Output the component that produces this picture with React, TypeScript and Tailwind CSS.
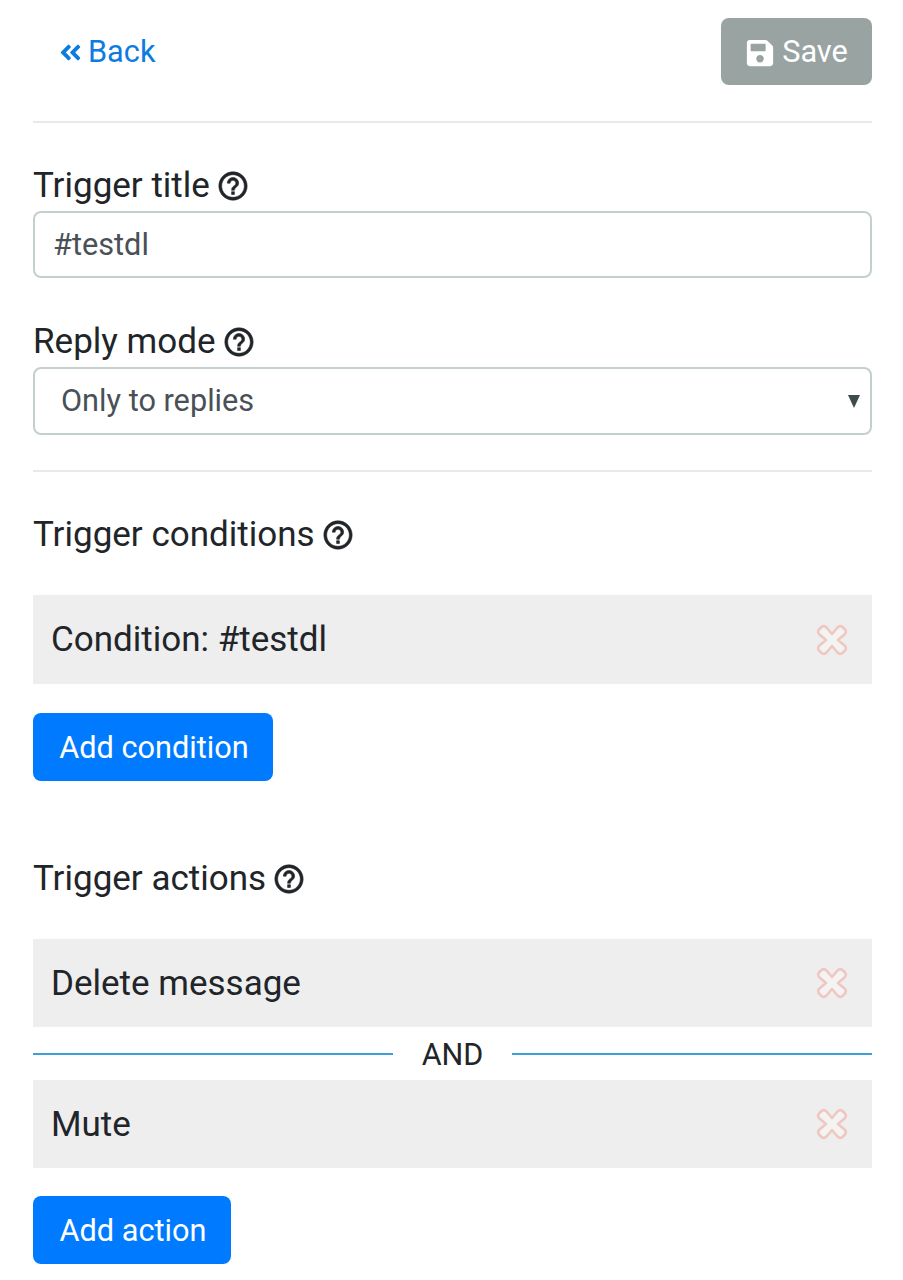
import { FaAngleDoubleLeft, FaSave } from "react-icons/fa";

function HelpIcon() {
  return (
    <svg width="34" height="34" viewBox="0 0 24 24" className="shrink-0 text-[#212529]">
      <path
        d="M11 18h2v-2h-2v2zm1-16C6.48 2 2 6.48 2 12s4.48 10 10 10 10-4.48 10-10S17.52 2 12 2zm0 18c-4.41 0-8-3.59-8-8s3.59-8 8-8 8 3.59 8 8-3.59 8-8 8zm0-14c-2.21 0-4 1.79-4 4h2c0-1.1.9-2 2-2s2 .9 2 2c0 2-3 1.75-3 5h2c0-2.25 3-2.5 3-5 0-2.21-1.79-4-4-4z"
        fill="currentColor"
        stroke="currentColor"
        strokeWidth="0.4"
      />
    </svg>
  );
}

function HelpLabel({ text, className }: { text: string; className: string }) {
  return (
    <div className={`flex h-[40px] items-center gap-[6px] pt-[2px] text-[35px] leading-[40px] text-[#212529] ${className}`}>
      <span>{text}</span>
      <HelpIcon />
    </div>
  );
}

function RemoveIcon() {
  return (
    <svg width="32" height="32" viewBox="0 0 32 32" className="-mt-[2px] shrink-0">
      <path
        d="M16 10 L21.5 3.5 Q24 1 26.5 3 L29 5.5 Q31 8 28.5 10.5 L22 16 L28.5 21.5 Q31 24 29 26.5 L26.5 29 Q24 31 21.5 28.5 L16 22 L10.5 28.5 Q8 31 5.5 29 L3 26.5 Q1 24 3.5 21.5 L10 16 L3.5 10.5 Q1 8 3 5.5 L5.5 3 Q8 1 10.5 3.5 Z"
        fill="#f3f4f2"
        stroke="#efc6c1"
        strokeWidth="2.5"
        strokeLinejoin="round"
      />
    </svg>
  );
}

function ItemRow({ text, height }: { text: string; height: string }) {
  return (
    <div className={`flex items-center justify-between bg-[#eeeeee] pl-[18px] pr-[24px] pt-[2px] ${height}`}>
      <span className="text-[35px] text-[#212529]">{text}</span>
      <RemoveIcon />
    </div>
  );
}

function AddButton({ text, width, className }: { text: string; width: string; className: string }) {
  return (
    <button className={`flex h-[68px] items-center justify-center rounded-[8px] bg-[#007bff] pl-[2px] pt-[2px] text-[30.7px] text-white ${width} ${className}`}>
      {text}
    </button>
  );
}

export default function App() {
  return (
    <div className="h-[1280px] w-[903px] overflow-hidden bg-white pl-[33px] pr-[31px] pt-[18px] font-['Roboto',sans-serif]">
      <div className="flex items-center justify-between">
        <a className="ml-[25px] flex items-center gap-[5px] pt-[2px] text-[30.7px] text-[#0d7be0]">
          <FaAngleDoubleLeft size={25} />
          <span>Back</span>
        </a>
        <button className="flex h-[67px] w-[151px] items-center justify-center gap-[7px] rounded-[8px] bg-[#98a3a2] pt-[2px] text-[30.7px] text-white">
          <FaSave size={30} />
          <span>Save</span>
        </button>
      </div>
      <hr className="mt-[36px] border-t-2 border-[#e8e9e9]" />

      <HelpLabel text="Trigger title" className="mt-[42px]" />
      <div className="mt-[6px] flex h-[67px] items-center rounded-[8px] border-2 border-[#c4d0d0] pl-[18px] pt-[2px] text-[30.7px] text-[#495057]">
        #testdl
      </div>

      <HelpLabel text="Reply mode" className="mt-[43px]" />
      <div className="mt-[6px] flex h-[68px] items-center justify-between rounded-[8px] border-2 border-[#c4d0d0] pl-[26px] pr-[10px] text-[30.7px] text-[#495057]">
        <span>Only to replies</span>
        <span className="h-0 w-0 border-x-[6px] border-t-[13px] border-x-transparent border-t-[#3f4a4c]" />
      </div>
      <hr className="mt-[35px] border-t-2 border-[#e8e9e9]" />

      <HelpLabel text="Trigger conditions" className="mt-[42px]" />
      <div className="mt-[41px]">
        <ItemRow text="Condition: #testdl" height="h-[89px]" />
      </div>
      <AddButton text="Add condition" width="w-[240px]" className="mt-[29px]" />

      <HelpLabel text="Trigger actions" className="mt-[77px]" />
      <div className="mt-[41px]">
        <ItemRow text="Delete message" height="h-[88px]" />
      </div>
      <div className="flex h-[53px] items-center">
        <div className="h-[2px] flex-1 bg-[#3f9fdc]" />
        <span className="w-[119px] pt-[3px] text-center text-[30.5px] text-[#212529]">AND</span>
        <div className="h-[2px] flex-1 bg-[#3f9fdc]" />
      </div>
      <ItemRow text="Mute" height="h-[88px]" />
      <AddButton text="Add action" width="w-[198px]" className="mt-[28px]" />
    </div>
  );
}
